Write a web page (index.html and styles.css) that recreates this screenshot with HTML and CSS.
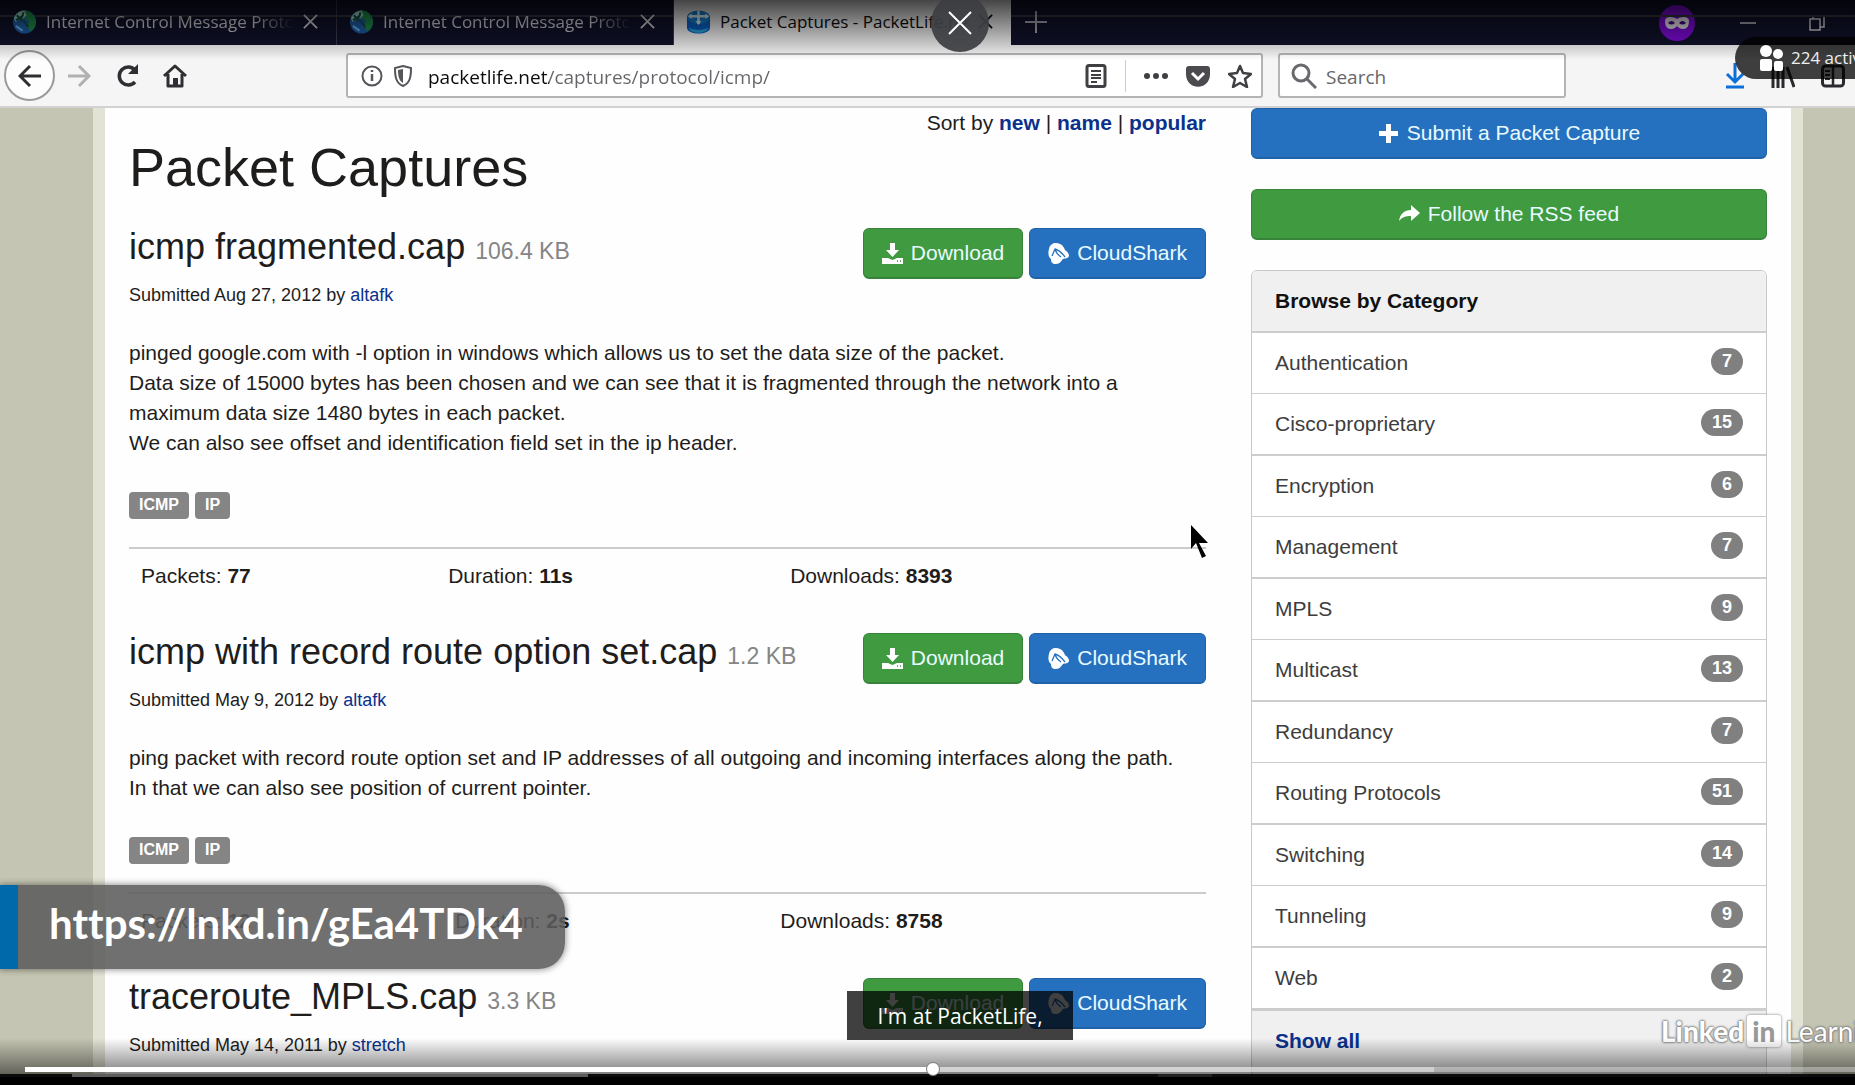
FILE: index.html
```html
<!DOCTYPE html>
<html lang="en">
<head>
<meta charset="utf-8">
<title>Packet Captures - PacketLife.net</title>
<link rel="stylesheet" href="styles.css">
</head>
<body>
<svg class="defs" aria-hidden="true">
  <symbol id="i-globe" viewBox="0 0 26 26"><circle cx="13" cy="13" r="12" fill="#1d5fa8"/><path d="M12 1c6-1 13 5 13 12 0 4-2 8-6 10l-3-6 2-5-5-3z" fill="#1f8f4a"/><path d="M2 9c2-5 6-8 11-8l2 5-5 5-3-1-3 3z" fill="#9fe0c8"/><path d="M5 6l6 6M4 11l8-5M12 3l-3 9M12 12l5 6" stroke="#174c46" stroke-width="2"/><path d="M4 17l7 5" stroke="#69b7f0" stroke-width="2"/></symbol>
  <symbol id="i-router" viewBox="0 0 26 26"><path d="M1 8v11c0 8 24 8 24 0V8z" fill="#0b62c9"/><path d="M3 19c0 7 20 7 20 0-5 3-15 3-20 0z" fill="#27a9e2"/><ellipse cx="13" cy="8" rx="12" ry="7" fill="#1583d6"/><path d="M13 1v14M3 7h20" stroke="#e8fbff" stroke-width="2.500"/><path d="M10 12l3 4 3-4M6 4L2 7l4 3M20 4l4 3-4 3" fill="#e8fbff"/></symbol>
  <symbol id="i-x" viewBox="0 0 16 16"><path d="M1 1l14 14M15 1L1 15" stroke="currentColor" stroke-width="2" fill="none"/></symbol>
  <symbol id="i-download" viewBox="0 0 21 21"><path d="M8 0h5v7h4l-6.500 7L4 7h4z" fill="#fff"/><path d="M0 15h6l4.500 2 4.500-2h6v6H0z" fill="#fff"/><path d="M15 18h1m2 0h1" stroke="#3f9a40" stroke-width="1.500"/></symbol>
  <symbol id="i-shark" viewBox="0 0 21 21"><path d="M1 6C2 0 8-1 12 1c3 1 4 4 5 6 3 2 4 4 4 6-1 3-4 2-6 3-2 2-3 5-7 5s-5-2-5-5C0 14 0 9 1 6z" fill="#fff"/><path d="M4 13L7 6c4 1 7 4 10 8M7 6c1 4 3 6 6 8" stroke="#2671bf" stroke-width="1.300" fill="none"/></symbol>
</svg>

<div class="stage">
  <div class="tabs">
    <div class="tab"><svg class="fav"><use href="#i-globe"/></svg><span class="tab-title fade">Internet Control Message Protocol</span><button class="tab-x" aria-label="Close tab"><svg><use href="#i-x"/></svg></button></div>
    <div class="tab"><svg class="fav"><use href="#i-globe"/></svg><span class="tab-title fade">Internet Control Message Protocol</span><button class="tab-x" aria-label="Close tab"><svg><use href="#i-x"/></svg></button></div>
    <div class="tab active"><svg class="fav"><use href="#i-router"/></svg><span class="tab-title">Packet Captures - PacketLife.net</span><button class="tab-x" aria-label="Close tab"><svg><use href="#i-x"/></svg></button></div>
    <button class="new-tab" aria-label="New tab"><svg viewBox="0 0 22 22" width="22" height="22"><path d="M11 0v22M0 11h22" stroke="currentColor" stroke-width="2"/></svg></button>
    <div class="win">
      <svg viewBox="0 0 36 36" width="36" height="36"><circle cx="18" cy="18" r="18" fill="#7d0bd8"/><path d="M6 16c0-5 8-5 12-2 4-3 12-3 12 2 0 5-2 8-6 8-3 0-5-2-6-3-1 1-3 3-6 3-4 0-6-3-6-8z" fill="#e9e4ee"/><path d="M9 18q3.500-4 7 0-3.500 3-7 0zM20 18q3.500-4 7 0-3.500 3-7 0z" fill="#4a0880"/></svg>
      <button aria-label="Minimize"><svg viewBox="0 0 16 16" width="16" height="16"><path d="M0 8h16" stroke="currentColor" stroke-width="1.500"/></svg></button>
      <button aria-label="Restore"><svg viewBox="0 0 16 16" width="16" height="16"><path d="M1 4h10v11H1zM4 4V1h11v11h-4" stroke="currentColor" stroke-width="1.500" fill="none"/></svg></button>
    </div>
  </div>

  <div class="toolbar">
    <div class="nav">
      <button class="back" aria-label="Back"><svg viewBox="0 0 24 24" width="24" height="24"><path d="M23 12H2M12 2L2 12l10 10" stroke="#2f2f33" stroke-width="3" fill="none"/></svg></button>
      <button aria-label="Forward"><svg viewBox="0 0 24 24" width="24" height="24"><path d="M1 12h21M12 2l10 10-10 10" stroke="#b0b0b2" stroke-width="3" fill="none"/></svg></button>
      <button aria-label="Reload"><svg viewBox="0 0 24 24" width="24" height="24"><path d="M20 18a9 9 0 1 1 0-12" stroke="#2f2f33" stroke-width="3.500" fill="none"/><path d="M23 0v10H13z" fill="#2f2f33"/></svg></button>
      <button aria-label="Home"><svg viewBox="0 0 24 24" width="24" height="24"><path d="M1 12L12 2l11 10M5 10v12h14V10" stroke="#2f2f33" stroke-width="3" fill="none" stroke-linejoin="round"/><path d="M10 14h5v8h-5z" fill="#2f2f33"/></svg></button>
    </div>
    <div class="url">
      <svg viewBox="0 0 22 22" width="22" height="22"><circle cx="11" cy="11" r="9.500" stroke="#55555a" stroke-width="2" fill="none"/><path d="M11 9v7M11 5v2" stroke="#55555a" stroke-width="2.500"/></svg>
      <svg viewBox="0 0 20 22" width="20" height="22"><path d="M10 1l8 2c0 9-1 15-8 18C3 18 2 12 2 3z" stroke="#55555a" stroke-width="2" fill="#fff"/><path d="M10 4v14C6 16 5 11 5 5z" fill="#55555a"/></svg>
      <input class="address" type="text" aria-label="Address" value="packetlife.net/captures/protocol/icmp/">
      <svg viewBox="0 0 22 24" width="22" height="24"><rect x="2" y="1.500" width="18" height="21" rx="2" stroke="#3f3f44" stroke-width="3" fill="none"/><path d="M6 7h10M6 11h10M6 14h10M6 18h6" stroke="#3f3f44" stroke-width="2"/></svg>
      <span class="sep"></span>
      <svg viewBox="0 0 24 24" width="24" height="24" fill="#3f3f44"><circle cx="3" cy="12" r="3"/><circle cx="12" cy="12" r="3"/><circle cx="21" cy="12" r="3"/></svg>
      <svg viewBox="0 0 24 24" width="24" height="24"><path d="M3 2h18q3 0 3 3v5c0 17-24 17-24 0V5q0-3 3-3z" fill="#4a4a4f"/><path d="M6 9l6 6 6-6" stroke="#fff" stroke-width="3" fill="none"/></svg>
      <svg viewBox="0 0 24 24" width="24" height="24"><path d="M12 2l3 7 8 1-6 5 2 8-7-4-7 4 2-8-6-5 8-1z" stroke="#3f3f44" stroke-width="2.500" fill="none" stroke-linejoin="round"/></svg>
    </div>
    <div class="search">
      <svg viewBox="0 0 26 26" width="26" height="26"><circle cx="10" cy="10" r="8" stroke="#6a6a6e" stroke-width="3" fill="none"/><path d="M16 16l9 9" stroke="#6a6a6e" stroke-width="3"/></svg>
      <input type="text" aria-label="Search" placeholder="Search">
    </div>
    <div class="tools">
      <svg viewBox="0 0 20 26" width="20" height="26"><path d="M10 0v19M2 11l8 8 8-8M1 24h18" stroke="#0a6fd8" stroke-width="3" fill="none"/></svg>
      <svg viewBox="0 0 24 24" width="24" height="24"><path d="M2 3v21M7 1v23M12 3v21M16 3l7 20" stroke="#2a2a2e" stroke-width="3"/></svg>
      <svg viewBox="0 0 24 24" width="24" height="24"><rect x="1.500" y="2" width="21" height="20" rx="3" stroke="#2a2a2e" stroke-width="3" fill="none"/><path d="M12 2v20" stroke="#2a2a2e" stroke-width="2.500"/><path d="M4 7h5M4 11h5M4 15h5" stroke="#2a2a2e" stroke-width="2"/></svg>
    </div>
  </div>

  <div class="viewport">
    <div class="sheet">
      <main>
        <p class="sort">Sort by <a href="#new">new</a> | <a href="#name">name</a> | <a href="#popular">popular</a></p>
        <h1>Packet Captures</h1>

        <article>
          <header><h3>icmp fragmented.cap <small>106.4 KB</small></h3>
            <div class="actions"><a class="btn green" href="#dl"><svg><use href="#i-download"/></svg>Download</a><a class="btn blue" href="#cs"><svg><use href="#i-shark"/></svg>CloudShark</a></div></header>
          <p class="by">Submitted Aug 27, 2012 by <a href="#altafk">altafk</a></p>
          <p class="desc">pinged google.com with -l option in windows which allows us to set the data size of the packet.<br>Data size of 15000 bytes has been chosen and we can see that it is fragmented through the network into a<br>maximum data size 1480 bytes in each packet.<br>We can also see offset and identification field set in the ip header.</p>
          <div class="tags"><span>ICMP</span><span>IP</span></div>
          <table><tr><td>Packets: <b>77</b></td><td>Duration: <b>11s</b></td><td>Downloads: <b>8393</b></td></tr></table>
        </article>

        <article>
          <header><h3>icmp with record route option set.cap <small>1.2 KB</small></h3>
            <div class="actions"><a class="btn green" href="#dl"><svg><use href="#i-download"/></svg>Download</a><a class="btn blue" href="#cs"><svg><use href="#i-shark"/></svg>CloudShark</a></div></header>
          <p class="by">Submitted May 9, 2012 by <a href="#altafk">altafk</a></p>
          <p class="desc">ping packet with record route option set and IP addresses of all outgoing and incoming interfaces along the path.<br>In that we can also see position of current pointer.</p>
          <div class="tags"><span>ICMP</span><span>IP</span></div>
          <table><tr><td>Packets: <b>12</b></td><td>Duration: <b>2s</b></td><td>Downloads: <b>8758</b></td></tr></table>
        </article>

        <article>
          <header><h3>traceroute_MPLS.cap <small>3.3 KB</small></h3>
            <div class="actions"><a class="btn green" href="#dl"><svg><use href="#i-download"/></svg>Download</a><a class="btn blue" href="#cs"><svg><use href="#i-shark"/></svg>CloudShark</a></div></header>
          <p class="by">Submitted May 14, 2011 by <a href="#stretch">stretch</a></p>
        </article>
      </main>

      <aside>
        <a class="btn blue" href="#submit"><svg viewBox="0 0 21 21"><path d="M8 1h5v7h7v5h-7v7H8v-7H1V8h7z" fill="#fff"/></svg>Submit a Packet Capture</a>
        <a class="btn green" href="#rss"><svg viewBox="0 0 21 21"><path d="M12 1l9 8-9 8v-5C7 12 3 13 0 17 1 10 5 6 12 6z" fill="#fff"/></svg>Follow the RSS feed</a>
        <section class="panel">
          <h2>Browse by Category</h2>
          <ul>
            <li><a href="#c">Authentication</a><span>7</span></li>
            <li><a href="#c">Cisco-proprietary</a><span>15</span></li>
            <li><a href="#c">Encryption</a><span>6</span></li>
            <li><a href="#c">Management</a><span>7</span></li>
            <li><a href="#c">MPLS</a><span>9</span></li>
            <li><a href="#c">Multicast</a><span>13</span></li>
            <li><a href="#c">Redundancy</a><span>7</span></li>
            <li><a href="#c">Routing Protocols</a><span>51</span></li>
            <li><a href="#c">Switching</a><span>14</span></li>
            <li><a href="#c">Tunneling</a><span>9</span></li>
            <li><a href="#c">Web</a><span>2</span></li>
          </ul>
          <a class="all" href="#all">Show all</a>
        </section>
      </aside>
    </div>
  </div>

  <div class="hscroll"></div>

  <svg class="cursor" viewBox="0 0 20 34" width="20" height="34"><path d="M1 0v24l5-6 6 15 4-2-7-13h9z" fill="#000"/></svg>
  <div class="link-card">https://lnkd.in/gEa4TDk4</div>
  <div class="brand"><b>Linked</b><span>in</span><em>Learning</em></div>
  <div class="shade-top"></div>
  <div class="shade-bottom"></div>
  <div class="caption">I'm at PacketLife,</div>
  <button class="close" aria-label="Close"><svg viewBox="0 0 24 24" width="24" height="24"><path d="M1 1l22 22M23 1L1 23" stroke="#fff" stroke-width="2"/></svg></button>
  <div class="viewers"><svg viewBox="0 0 25 26" width="25" height="26" fill="#fff"><circle cx="7" cy="6" r="6"/><rect x="1" y="14" width="12" height="12" rx="2"/><circle cx="19" cy="9" r="5"/><rect x="15" y="16" width="9" height="10" rx="2"/></svg>224 active</div>
  <input class="seek" type="range" min="0" max="100" step="any" value="49.6" aria-label="Seek">
</div>
</body>
</html>
```
FILE: styles.css
```css
* { box-sizing: border-box; }
body { margin: 0; background: #000; color: #1f1d1b; font: 21px/30px "Liberation Sans", Arial, sans-serif; }
h1, h2, h3, p, ul { margin: 0; padding: 0; font-weight: normal; }
button { border: 0; padding: 0; background: none; color: inherit; display: flex; align-items: center; justify-content: center; }
svg { flex: none; display: block; }
a { color: #0a318c; text-decoration: none; }
.defs { position: absolute; width: 0; height: 0; }
.stage { position: relative; height: 100vh; overflow: hidden; display: flex; flex-direction: column; }

/* browser tabs */
.tabs { flex: none; height: 45px; display: flex; background: #10112a; color: #cfd0d6; font: 17px/24px "Open Sans", "Noto Sans", sans-serif; position: relative; }
.tabs::before { content: ""; position: absolute; inset: 15px 0 auto; height: 2px; background: #35363f; }
.tab { position: relative; width: 337px; display: flex; align-items: center; gap: 9px; padding: 0 18px 2px 12px; border-right: 1px solid #3a3b4c; }
.tab.active { background: #f5f5f6; color: #0c0c0d; border: 0; }
.fav { width: 25px; height: 26px; }
.tab-title { flex: 1; min-width: 0; overflow: hidden; white-space: nowrap; }
.tab-title.fade { mask-image: linear-gradient(90deg, #000 84%, transparent); }
.tab-x svg { width: 15px; height: 15px; }
.new-tab { width: 50px; opacity: .8; padding-bottom: 2px; }
.win { margin-left: auto; display: flex; align-items: center; padding-right: 30px; }
.win button { margin-left: 53px; }
.win svg + button { margin-left: 45px; }

/* navigation bar */
.toolbar { flex: none; height: 63px; display: flex; align-items: center; background: #f5f5f6; border-bottom: 2px solid #d2d2d2; font: 19px/28px "Open Sans", "Noto Sans", sans-serif; }
.nav { display: flex; align-items: center; gap: 24px; width: 346px; padding-left: 4px; }
.back { width: 51px; height: 51px; border: 2px solid #9a9a9c; border-radius: 50%; background: #fdfdfd; margin-right: -12px; }
.url, .search { height: 45px; display: flex; align-items: center; background: #fff; border: 2px solid #b4b4b6; border-radius: 3px; }
.url { flex: 1; gap: 10px; padding: 0 9px 0 13px; }
.url .sep { width: 1px; height: 32px; background: #ccc; margin: 0 8px; }
.url svg:nth-last-child(-n+2) { margin-left: 8px; }
.toolbar input { flex: 1; min-width: 0; border: 0; padding: 2px 0 0; outline: 0; font: inherit; color: #55555a; background: none; }
.toolbar .address { margin-left: 5px; color: transparent; background: linear-gradient(90deg, #0c0c0d 121px, #66666a 121px); background-clip: text; }
.search { width: 288px; margin-left: 15px; padding: 0 11px; gap: 9px; }
.search input::placeholder { color: #66666a; opacity: 1; }
.tools { display: flex; align-items: center; gap: 26px; width: 289px; justify-content: flex-end; padding-right: 10px; }

/* page */
.viewport { flex: 1; min-height: 0; overflow: hidden; background: #c5c5b3; padding: 0 52px 0 93px; }
.sheet { min-height: 100%; background: #fefefe; border: solid #e2e2d5; border-width: 0 12px; padding: 0 24px; display: grid; grid-template-columns: minmax(0, 1077fr) minmax(0, 516fr); column-gap: 45px; }
.sort { text-align: right; }
.sort a { font-weight: bold; }
h1 { font-size: 54px; line-height: 58px; margin-bottom: 32px; }
article { margin-bottom: 30px; }
article header { display: flex; justify-content: space-between; align-items: flex-start; height: 52px; }
h3 { font-size: 36px; line-height: 38px; }
h3 small { font-size: 23px; color: #858585; }
.actions { display: flex; gap: 6px; }
.btn { display: flex; align-items: center; justify-content: center; gap: 8px; height: 51px; padding: 0 18px; border: 1px solid; border-bottom-width: 2px; border-radius: 6px; color: #e9fbff; white-space: nowrap; }
.btn svg { width: 21px; height: 21px; }
.green { background: #3f9a40; border-color: #37833a; }
.blue { background: #2671bf; border-color: #2062a8; }
.by { font-size: 18px; margin-bottom: 28px; }
.desc { margin-bottom: 34px; }
.tags { display: flex; gap: 6px; margin-bottom: 28px; }
.tags span { height: 27px; padding: 0 10px; border-radius: 4px; background: #858585; color: #fff; font: bold 16px/25px "Liberation Sans", Arial, sans-serif; }
table { width: 100%; border-collapse: collapse; border-top: 2px solid #ccc; }
td { padding: 12px; }

/* sidebar */
aside .btn { margin-bottom: 30px; }
.panel { border: 1px solid #c9c9c9; border-radius: 6px; background: #fff; }
.panel h2, .all { display: block; font-size: 21px; font-weight: bold; background: #f0f0f0; padding: 15px 23px; }
.panel h2 { border-radius: 6px 6px 0 0; color: #111; }
.panel ul { list-style: none; }
.panel li { display: flex; justify-content: space-between; padding: 15px 23px; border-top: 1px solid #cdcdcd; }
.panel li:nth-child(odd) { border-top-width: 2px; }
.panel li a { color: #3d3d3d; }
.panel li span { height: 27px; padding: 0 11px; border-radius: 14px; background: #808080; color: #fff; font: bold 18px/26px "Liberation Sans", Arial, sans-serif; }
.all { border-top: 3px solid #cdcdcd; padding-bottom: 40px; }

/* player layer */
.hscroll { flex: none; height: 11px; background: linear-gradient(90deg, #0c0c0c 72px, #5c5c5c 72px, #5c5c5c 588px, #0c0c0c 588px, #0c0c0c 1158px, #222 1158px, #222 1212px, #0c0c0c 1212px) top / 100% 3px no-repeat #000; }
.cursor { position: absolute; left: 1190px; top: 525px; }
.link-card { position: absolute; left: 0; top: 885px; height: 84px; padding: 0 42px 0 31px; border-left: 18px solid #0069aa; border-radius: 0 26px 26px 0; background: rgba(92, 92, 92, .88); background-clip: padding-box; box-shadow: 0 0 6px 1px rgba(0, 0, 0, .4); color: #fff; font: bold 42px/76px Lato, sans-serif; font-variant-ligatures: none; }
.brand { position: absolute; left: 1661px; top: 1014px; display: flex; align-items: center; gap: 3px; color: #fff; font: 28px/34px Lato, sans-serif; white-space: nowrap; text-shadow: 0 0 3px #777, 0 0 2px #777, 0 0 2px #777; }
.brand span { border: 3px solid #fff; border-radius: 3px; background: #fff; color: #999; font-weight: 900; line-height: 26px; padding: 0 2px; text-shadow: none; box-shadow: 0 0 3px #777; }
.brand b { font-weight: 900; }
.brand em { font-style: normal; margin-left: 2px; }
.shade-top, .shade-bottom { position: absolute; left: 0; right: 0; pointer-events: none; }
.shade-top { top: 0; height: 60px; background: linear-gradient(rgba(0, 0, 0, .72), transparent); }
.shade-bottom { bottom: 11px; height: 36px; background: linear-gradient(transparent, rgba(0, 0, 0, .5)); }
.caption { position: absolute; left: 847px; top: 991px; width: 226px; height: 49px; background: rgba(0, 0, 0, .75); color: #fff; text-align: center; font: 21px/50px "Open Sans", "Noto Sans", sans-serif; white-space: nowrap; }
.close { position: absolute; left: 931px; top: -6px; width: 58px; height: 58px; border-radius: 50%; background: rgba(60, 62, 66, .93); }
.viewers { position: absolute; left: 1735px; top: 37px; height: 42px; padding: 0 24px; display: flex; align-items: center; gap: 7px; border-radius: 21px; background: rgba(0, 0, 0, .75); color: #eee; font: 17px/42px "Open Sans", "Noto Sans", sans-serif; white-space: nowrap; }
.seek { position: absolute; left: 25px; bottom: 8px; width: calc(100% - 25px); height: 16px; margin: 0; appearance: none; background: linear-gradient(90deg, #fff 49.600%, rgba(255, 255, 255, .6) 49.600%, rgba(255, 255, 255, .6) 77%, rgba(255, 255, 255, .35) 77%) center / 100% 5px no-repeat; }
.seek::-webkit-slider-thumb { appearance: none; width: 14px; height: 14px; border: 1px solid #777; border-radius: 50%; background: #fff; }
```
